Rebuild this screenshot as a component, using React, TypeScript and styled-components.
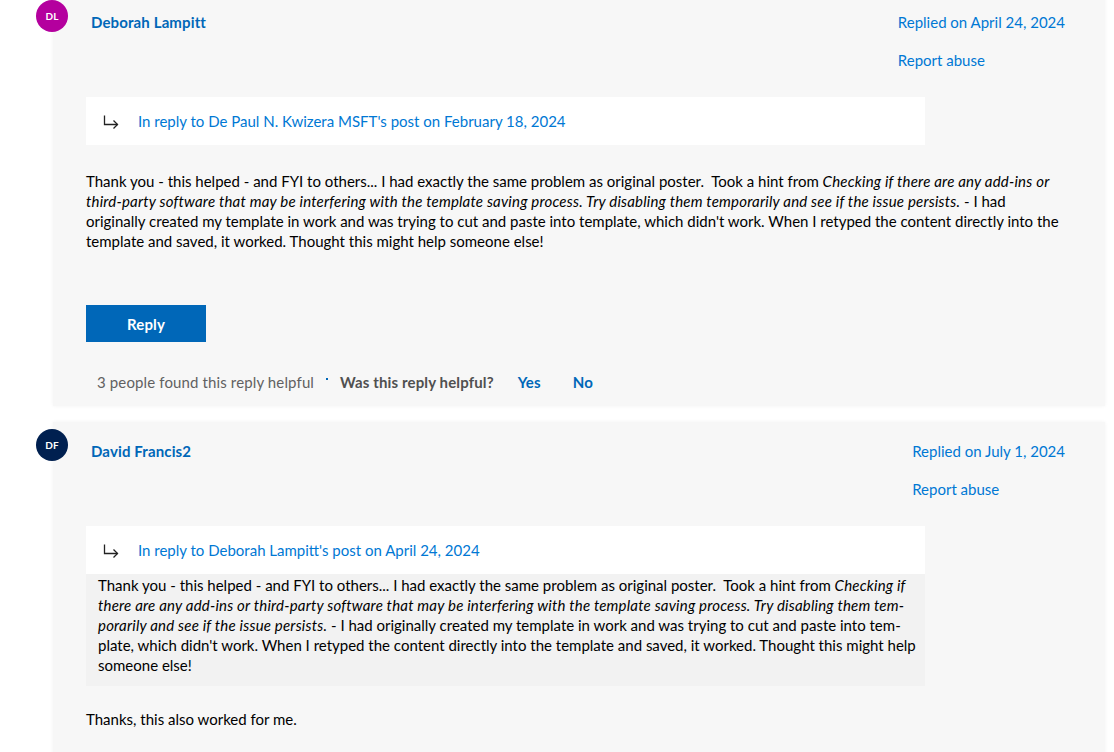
import React from "react";
import styled, { createGlobalStyle } from "styled-components";

const Global = createGlobalStyle`
  html, body { margin: 0; padding: 0; background: #ffffff; }
  body {
    font-family: "Segoe UI", Lato, "Noto Sans", sans-serif;
    letter-spacing: 0.13px;
    color: #000;
    overflow: hidden;
  }
`;

const Thread = styled.div`
  margin-top: -7px;
  display: flex;
  flex-direction: column;
  gap: 16px;
`;

const Card = styled.section<{ $last?: boolean }>`
  position: relative;
  margin-left: 53px;
  width: 1052px;
  box-sizing: border-box;
  background: #f7f7f7;
  box-shadow: 0 0 4px rgba(0, 0, 0, 0.05);
  padding: 18px 40px ${(p) => (p.$last ? 60 : 12)}px 33px;
`;

const Avatar = styled.div<{ $bg: string }>`
  position: absolute;
  left: -17px;
  top: 7px;
  width: 32px;
  height: 32px;
  border-radius: 50%;
  background: ${(p) => p.$bg};
  color: #fff;
  font-size: 10px;
  font-weight: 700;
  letter-spacing: 0;
  display: flex;
  align-items: center;
  justify-content: center;
`;

const Header = styled.div`
  display: flex;
  justify-content: space-between;
  align-items: flex-start;
`;

const Name = styled.a`
  padding-left: 5px;
  color: #0067b8;
  font-weight: 700;
  font-size: 15px;
  line-height: 22px;
  text-decoration: none;
`;

const Meta = styled.div`
  display: flex;
  flex-direction: column;
  gap: 16px;
  letter-spacing: 0;
`;

const MetaLink = styled.a`
  color: #0078d4;
  font-size: 15px;
  line-height: 22px;
  text-decoration: none;
`;

const ReplyBox = styled.div`
  margin-top: 26px;
  width: 839px;
`;

const ReplyTo = styled.div`
  background: #fff;
  height: 48px;
  display: flex;
  align-items: center;
  padding-left: 17px;
  gap: 19px;
`;

const ReplyLink = styled.a`
  color: #0078d4;
  font-size: 15px;
  letter-spacing: 0;
  text-decoration: none;
`;

const Quote = styled.div`
  background: #f2f2f2;
  padding: 1px 0 11px 12px;
  font-size: 15px;
  line-height: 20px;
  letter-spacing: 0;
  hyphens: manual;
  & em { letter-spacing: 0.2px; }
`;

const Body = styled.p<{ $mt: number }>`
  margin: ${(p) => p.$mt}px 0 0 0;
  font-size: 15px;
  line-height: 20px;
  letter-spacing: 0;
  & em { letter-spacing: 0.2px; }
`;

const ReplyButton = styled.button`
  margin-top: 54px;
  width: 120px;
  height: 37px;
  border: 0;
  background: #0067b8;
  color: #fff;
  font-family: inherit;
  letter-spacing: inherit;
  font-size: 15px;
  font-weight: 700;
  cursor: pointer;
`;

const Footer = styled.div`
  margin-top: 28px;
  padding-left: 11px;
  display: flex;
  align-items: center;
  height: 24px;
  font-size: 15px;
`;

const Count = styled.span`
  color: #616161;
`;

const Dot = styled.span`
  display: inline-block;
  width: 2px;
  height: 2px;
  background: #0067b8;
  margin: 0 12px 6px 12px;
`;

const Ask = styled.span`
  color: #505050;
  font-weight: 700;
`;

const Vote = styled.a`
  color: #0067b8;
  font-weight: 700;
  margin-left: 24px;
  text-decoration: none;
  & + & { margin-left: 32px; }
`;

const Arrow = () => (
  <svg width="16" height="15" viewBox="0 0 16 15" fill="none" stroke="#222" strokeWidth="1.3">
    <path d="M1.5 1.5 V10.5 H14.5" />
    <path d="M10.5 6.5 L14.5 10.5 L10.5 14.5" />
  </svg>
);

export default function App() {
  return (
    <>
      <Global />
      <Thread>
        <Card>
          <Avatar $bg="#b4009e">DL</Avatar>
          <Header>
            <Name>Deborah Lampitt</Name>
            <Meta>
              <MetaLink>Replied on April 24, 2024</MetaLink>
              <MetaLink>Report abuse</MetaLink>
            </Meta>
          </Header>
          <ReplyBox>
            <ReplyTo>
              <Arrow />
              <ReplyLink>In reply to De Paul N. Kwizera MSFT's post on February 18, 2024</ReplyLink>
            </ReplyTo>
          </ReplyBox>
          <Body $mt={26}>
            Thank you - this helped - and FYI to others... I had exactly the same problem as original poster.&nbsp; Took a hint from{" "}
            <em>
              Checking if there are any add-ins or third-party software that may be interfering with the template saving process. Try disabling them temporarily and see if the issue persists.
            </em>{" "}
            - I had originally created my template in work and was trying to cut and paste into template, which didn't work. When I retyped the content directly into the template and saved, it worked. Thought this might help someone else!
          </Body>
          <ReplyButton>Reply</ReplyButton>
          <Footer>
            <Count>3 people found this reply helpful</Count>
            <Dot />
            <Ask>Was this reply helpful?</Ask>
            <Vote>Yes</Vote>
            <Vote>No</Vote>
          </Footer>
        </Card>
        <Card $last>
          <Avatar $bg="#002050">DF</Avatar>
          <Header>
            <Name>David Francis2</Name>
            <Meta>
              <MetaLink>Replied on July 1, 2024</MetaLink>
              <MetaLink>Report abuse</MetaLink>
            </Meta>
          </Header>
          <ReplyBox>
            <ReplyTo>
              <Arrow />
              <ReplyLink>In reply to Deborah Lampitt's post on April 24, 2024</ReplyLink>
            </ReplyTo>
            <Quote>
              Thank you - this helped - and FYI to others... I had exactly the same problem as original poster.&nbsp; Took a hint from{" "}
              <em>
                Checking if there are any add-ins or third-party software that may be interfering with the template saving process. Try disabling them tem{"\u00AD"}porarily and see if the issue persists.
              </em>{" "}
              - I had originally created my template in work and was trying to cut and paste into tem{"\u00AD"}plate, which didn't work. When I retyped the content directly into the template and saved, it worked. Thought this might help someone else!
            </Quote>
          </ReplyBox>
          <Body $mt={23}>Thanks, this also worked for me.</Body>
        </Card>
      </Thread>
    </>
  );
}
